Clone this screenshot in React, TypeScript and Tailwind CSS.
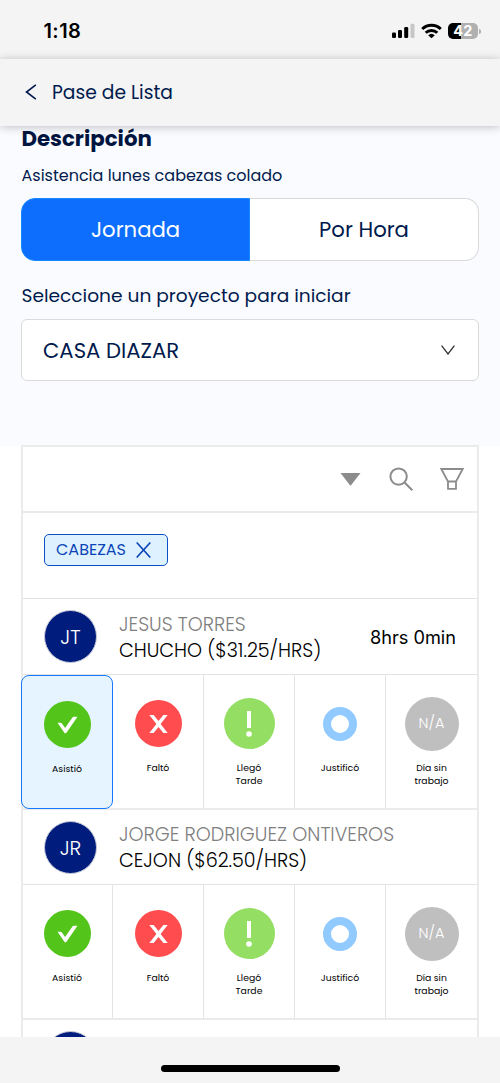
import React from "react";

const POPPINS = "font-['Poppins','Inter',sans-serif] whitespace-nowrap";

function StatusBar() {
  return (
    <div className="h-[59px] shrink-0 bg-[#f4f4f4] flex justify-between pl-[43.5px] pr-[19px]">
      <span className="mt-[17px] font-['Inter',sans-serif] font-semibold text-[20px] leading-[28px] tracking-[0.4px] text-black">1:18</span>
      <div className="mt-[23px] h-4 flex items-center">
        <svg className="w-[24px] h-4" viewBox="0 0 24 16">
          <rect x="1" y="9.5" width="4" height="5.5" rx="1.2" />
          <rect x="7" y="7" width="4" height="8" rx="1.2" />
          <rect x="13.2" y="4" width="4" height="11" rx="1.2" />
          <rect x="19.5" y="0.8" width="4" height="14.2" rx="1.2" fill="#c6c6c6" />
        </svg>
        <svg className="ml-[6px] w-[21px] h-4" viewBox="0 0 21 16" fill="none" stroke="#000" strokeWidth="2.9">
          <path d="M1.2 6a13.4 13.4 0 0 1 18.6 0" />
          <path d="M4.7 9.8a8.4 8.4 0 0 1 11.6 0" />
          <path d="M10.5 15.2 7.2 12.2a4.8 4.8 0 0 1 6.6 0z" fill="#000" stroke="none" />
        </svg>
        <div className="ml-[6px] flex w-[30px] h-4 items-center justify-center rounded-[5px] bg-[linear-gradient(90deg,#000_42%,#b0b0b0_42%)]">
          <span className="font-['Inter',sans-serif] font-bold text-[14.5px] leading-none tracking-[0.3px] text-white">42</span>
        </div>
        <div className="ml-px w-[2px] h-[5px] rounded-r-full bg-[#b0b0b0]" />
      </div>
    </div>
  );
}

function Header() {
  return (
    <header className="relative z-10 h-[66.5px] shrink-0 bg-[#f4f4f4] flex items-center pl-[25px] shadow-[0_1px_9px_rgba(0,0,0,0.24)]">
      <svg className="w-[12px] h-[16px]" viewBox="0 0 12 16" fill="none" stroke="#001a4d" strokeWidth="1.6">
        <path d="M10.8 0.9 1.5 8l9.3 7.1" />
      </svg>
      <span className={POPPINS + " ml-[15px] pt-px text-[18.7px] leading-[28px] text-[#001a4d]"}>Pase de Lista</span>
    </header>
  );
}

function CheckIcon() {
  return (
    <div className="size-[47px] rounded-full bg-[#52c41a] flex items-center justify-center">
      <svg className="w-[21px] h-[18px]" viewBox="0 0 21 18" fill="#fff">
        <path d="M.5 6.8h3c.6 0 1 .2 1.4.7l3.2 4.5 7.3-10.4c.4-.5.8-.8 1.4-.8h3.7L9.3 16.9c-.5.6-1.3.6-1.8 0z" />
      </svg>
    </div>
  );
}

function CrossIcon() {
  return (
    <div className="size-[47px] rounded-full bg-[#ff4d4f] flex items-center justify-center">
      <svg className="w-[19px] h-[18px]" viewBox="0 0 19 18" fill="#fff">
        <path d="M.3 0h4.3L9.5 5.9 14.4 0h4.3L11.6 9l7.1 9h-4.3L9.5 12.1 4.6 18H.3l7.1-9z" />
      </svg>
    </div>
  );
}

function LateIcon() {
  return (
    <div className="size-[51px] rounded-full bg-[#95de64] flex items-center justify-center">
      <svg className="w-[8px] h-[26px]" viewBox="0 0 8 26" fill="#fff">
        <path d="M2 0h4v17H2z" />
        <circle cx="4" cy="23" r="2.8" />
      </svg>
    </div>
  );
}

function JustifiedIcon() {
  return <div className="size-[34px] rounded-full border-8 border-[#91caff] bg-white" />;
}

function NoWorkIcon() {
  return (
    <div className={POPPINS + " size-[54px] rounded-full bg-[#bfbfbf] flex items-center justify-center text-[14.5px] font-light leading-none text-white"}>
      N/A
    </div>
  );
}

const OPTIONS = [
  { lines: ["Asistió"], Icon: CheckIcon },
  { lines: ["Faltó"], Icon: CrossIcon },
  { lines: ["Llegó", "Tarde"], Icon: LateIcon },
  { lines: ["Justificó"], Icon: JustifiedIcon },
  { lines: ["Día sin", "trabajo"], Icon: NoWorkIcon },
];

function Avatar({ initials }: { initials: string }) {
  return (
    <div className={POPPINS + " size-[53px] shrink-0 rounded-full border border-[#c8ccd8] bg-[#001d7e] flex items-center justify-center pt-px text-[20px] font-light leading-none text-white"}>
      {initials}
    </div>
  );
}

type EmployeeProps = {
  initials: string;
  name: string;
  alias: string;
  hours?: string;
  selected?: number;
  headClass: string;
};

function Employee({ initials, name, alias, hours, selected, headClass }: EmployeeProps) {
  return (
    <section>
      <div className={"flex items-center border-b border-[#e2e2e2] pl-[21px] pr-[21px] " + headClass}>
        <Avatar initials={initials} />
        <div className={POPPINS + " ml-[22px] pt-[2px] flex flex-col text-[19.1px] leading-[26px] font-light"}>
          <span className="text-[#808080]">{name}</span>
          <span className="text-black">{alias}</span>
        </div>
        {hours && <span className="ml-auto whitespace-nowrap font-['Inter',sans-serif] text-[18.2px] leading-[26px] text-black">{hours}</span>}
      </div>
      <div className="h-[135px] flex border-b-2 border-[#ebebeb] -ml-px">
        {OPTIONS.map(({ lines, Icon }, i) => {
          const on = i === selected;
          return (
            <div
              key={i}
              className={
                "flex flex-col items-center shrink-0 " +
                (on
                  ? "relative -ml-px w-[92px] h-[134px] rounded-[8px] border-[1.5px] border-[#1677ff] bg-[#e6f4ff]"
                  : "w-[91px] border-r border-[#e4e4e4] last:w-[91px] last:border-r-0")
              }
            >
              <div className="h-[97px] w-full flex items-center justify-center">
                <Icon />
              </div>
              <div className={POPPINS + " -mt-[11px] flex flex-col items-center text-[9.3px] leading-[13px] text-black"}>
                {lines.map((l) => <span key={l}>{l}</span>)}
              </div>
            </div>
          );
        })}
      </div>
    </section>
  );
}

export default function App() {
  return (
    <div className="w-[500px] h-[1083px] overflow-hidden flex flex-col bg-white">
      <StatusBar />
      <Header />
      <main className="flex-1 min-h-0">
        <div className="h-[320.5px] bg-[#fafbff] px-[21px] flex flex-col text-[#001a4d]">
          <h1 className={POPPINS + " pl-[0.5px] text-[21.3px] leading-[26px] font-bold text-[#00153f]"}>Descripción</h1>
          <p className={POPPINS + " mt-[12.5px] pl-[0.5px] text-[16px] leading-[24px]"}>Asistencia lunes cabezas colado</p>
          <div className={POPPINS + " mt-[10px] flex h-[63px] w-[458px] shrink-0 text-[21.2px]"}>
            <button className="flex w-[229px] items-center justify-center rounded-l-[14px] border border-[#1589ff] bg-[#0d6efd] text-white">Jornada</button>
            <button className="flex w-[229px] items-center justify-center rounded-r-[14px] border border-l-0 border-[#dadada] bg-white">Por Hora</button>
          </div>
          <label className={POPPINS + " mt-[22px] pl-[0.5px] text-[18.6px] leading-[26px]"}>Seleccione un proyecto para iniciar</label>
          <div className="mt-[10px] flex h-[62px] w-[458px] shrink-0 items-center justify-between rounded-[6px] border border-[#dadada] bg-white pl-[21px] pr-[23px]">
            <span className={POPPINS + " pt-[2px] text-[21.2px]"}>CASA DIAZAR</span>
            <svg className="w-[14px] h-[10px]" viewBox="0 0 14 10" fill="none" stroke="#333" strokeWidth="1.3">
              <path d="M.6.6 7 9 13.4.6" />
            </svg>
          </div>
        </div>
        <div className="-mt-px ml-[21px] w-[458px] border-x-2 border-t-2 border-[#ebebeb] bg-white">
          <div className="h-[66px] border-b-2 border-[#ebebeb] flex items-center justify-end pr-[13px]">
            <svg className="w-[21px] h-[13px]" viewBox="0 0 20 13" fill="#8c8c8c">
              <path d="M0 0h20L10.5 12.3q-.5.5-1 0z" />
            </svg>
            <svg className="ml-[28px] w-[24px] h-[24px]" viewBox="0 0 24 24" fill="none" stroke="#8c8c8c" strokeWidth="2">
              <circle cx="9.6" cy="9.6" r="8.2" />
              <path d="m15.3 15.3 8 8" />
            </svg>
            <svg className="ml-[27px] w-[24px] h-[22px]" viewBox="0 0 24 22" fill="none" stroke="#8c8c8c" strokeWidth="1.8">
              <path d="M1.3 1h21.4L16 13.5v7.4H8v-7.4zM8 13.5h8" />
            </svg>
          </div>
          <div className="h-[86px] border-b border-[#e2e2e2] pl-[21px] pt-[21px]">
            <div className="flex h-[32px] w-[124px] items-center rounded-[5px] border border-[#0d4fc4] bg-[#def1ff] pl-[11px] text-[#0a45b8]">
              <span className={POPPINS + " w-[71px] text-[16px]"}>CABEZAS</span>
              <svg className="ml-[9px] w-[15px] h-[16px]" viewBox="0 0 15 16" fill="none" stroke="currentColor" strokeWidth="1.6">
                <path d="M.7.5l13.6 15M14.3.5.7 15.5" />
              </svg>
            </div>
          </div>
          <Employee initials="JT" name="JESUS TORRES" alias="CHUCHO ($31.25/HRS)" hours="8hrs 0min" selected={0} headClass="h-[76px]" />
          <Employee initials="JR" name="JORGE RODRIGUEZ ONTIVEROS" alias="CEJON ($62.50/HRS)" headClass="h-[75px]" />
          <div className="pl-[21px] pt-[10.5px]">
            <Avatar initials="" />
          </div>
        </div>
      </main>
      <footer className="relative z-10 h-[46px] shrink-0 bg-[#f4f4f4] flex justify-center pt-[28px]">
        <div className="h-[7px] w-[179px] rounded-full bg-black" />
      </footer>
    </div>
  );
}
